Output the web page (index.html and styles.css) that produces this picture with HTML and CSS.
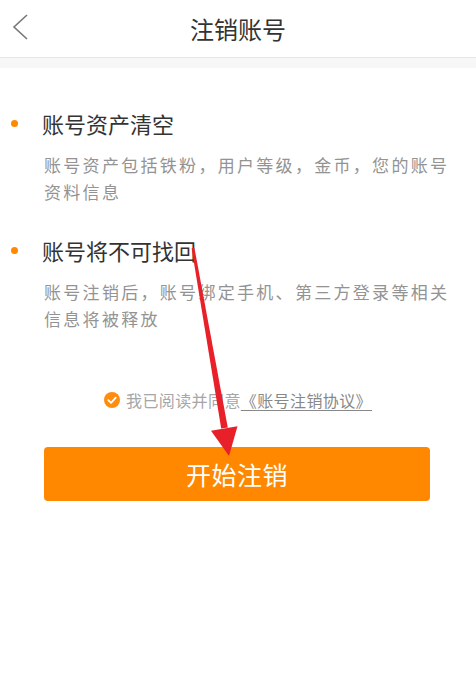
FILE: index.html
```html
<!DOCTYPE html>
<html lang="zh-CN">
<head>
    <meta charset="UTF-8">
    <meta name="viewport" content="width=device-width, initial-scale=1.0">
    <title>注销账号</title>
    <link rel="stylesheet" href="styles.css">
</head>
<body>
<div class="page">
    <div class="header">
        <span class="back">
            <svg width="20" height="30" viewBox="0 0 20 30">
                <polyline points="15,2 2,14 15,26" fill="none" stroke="#777" stroke-width="1.6"/>
            </svg>
        </span>
        <div class="header-title">注销账号</div>
    </div>
    <div class="band"></div>

    <div class="list">
        <div class="item">
            <span class="dot"></span>
            <div class="item-body">
                <div class="item-title">账号资产清空</div>
                <p class="item-desc">账号资产包括铁粉，用户等级，金币，您的账号资料信息</p>
            </div>
        </div>
        <div class="item">
            <span class="dot"></span>
            <div class="item-body">
                <div class="item-title">账号将不可找回</div>
                <p class="item-desc">账号注销后，账号绑定手机、第三方登录等相关信息将被释放</p>
            </div>
        </div>
    </div>

    <div class="agree">
        <svg class="check" width="16" height="16" viewBox="0 0 16 16">
            <circle cx="8" cy="8" r="8" fill="#ff8c0f"/>
            <polyline points="4.3,8.2 7,10.8 11.8,5.6" fill="none" stroke="#fff" stroke-width="1.8" stroke-linecap="round" stroke-linejoin="round"/>
        </svg>
        <span class="agree-text">我已阅读并同意</span>
        <span class="agree-link">《账号注销协议》</span>
    </div>

    <div class="btn">开始注销</div>

    <!-- 标注箭头 -->
    <svg class="mark" width="476" height="697" viewBox="0 0 476 697">
        <polygon points="191.6,248.3 194.4,247.7 227.8,427.5 221.2,428.5" fill="#e8202a"/>
        <polygon points="211,430.8 237.5,426.2 229,456" fill="#e8202a"/>
    </svg>
</div>
</body>
</html>
```

FILE: styles.css
```css
body, html {
    margin: 0;
    padding: 0;
    background: #fff;
    font-family: 'Noto Sans CJK SC', 'Noto Sans', sans-serif;
}
.page {
    position: relative;
    width: 476px;
    height: 697px;
    overflow: hidden;
}
.header {
    position: relative;
    height: 57px;
    border-bottom: 1px solid #e6e6e6;
    display: flex;
    justify-content: center;
    align-items: center;
}
.back {
    position: absolute;
    left: 12px;
    top: 13px;
    width: 20px;
    height: 30px;
}
.header-title {
    font-size: 24px;
    color: #333;
    line-height: 30px;
}
.band {
    height: 10px;
    background: #f7f7f7;
}
.list {
    padding: 40px 16px 0 11px;
    display: flex;
    flex-direction: column;
    gap: 30px;
}
.item {
    display: flex;
    align-items: flex-start;
}
.dot {
    width: 7px;
    height: 7px;
    border-radius: 50%;
    background: #ff8a00;
    margin-top: 12px;
    margin-right: 24px;
    flex-shrink: 0;
}
.item-title {
    font-size: 22px;
    line-height: 30px;
    color: #333;
}
.item-desc {
    margin: 13px 0 0 2px;
    font-size: 17px;
    line-height: 27px;
    letter-spacing: 2.3px;
    color: #939393;
}
.agree {
    display: flex;
    justify-content: center;
    align-items: center;
    margin-top: 56px;
    height: 24px;
    font-size: 16px;
    letter-spacing: 0.4px;
}
.check {
    margin-right: 6px;
}
.agree-text {
    color: #a6a6a6;
}
.agree-link {
    color: #888;
    text-decoration: underline;
    text-underline-offset: 3px;
}
.btn {
    margin: 35px 46px 0 44px;
    height: 54px;
    border-radius: 4px;
    background: #ff8800;
    color: #fff;
    font-size: 25px;
    line-height: 54px;
    text-align: center;
    letter-spacing: 0.5px;
}
.mark {
    position: absolute;
    left: 0;
    top: 0;
    pointer-events: none;
}
```
